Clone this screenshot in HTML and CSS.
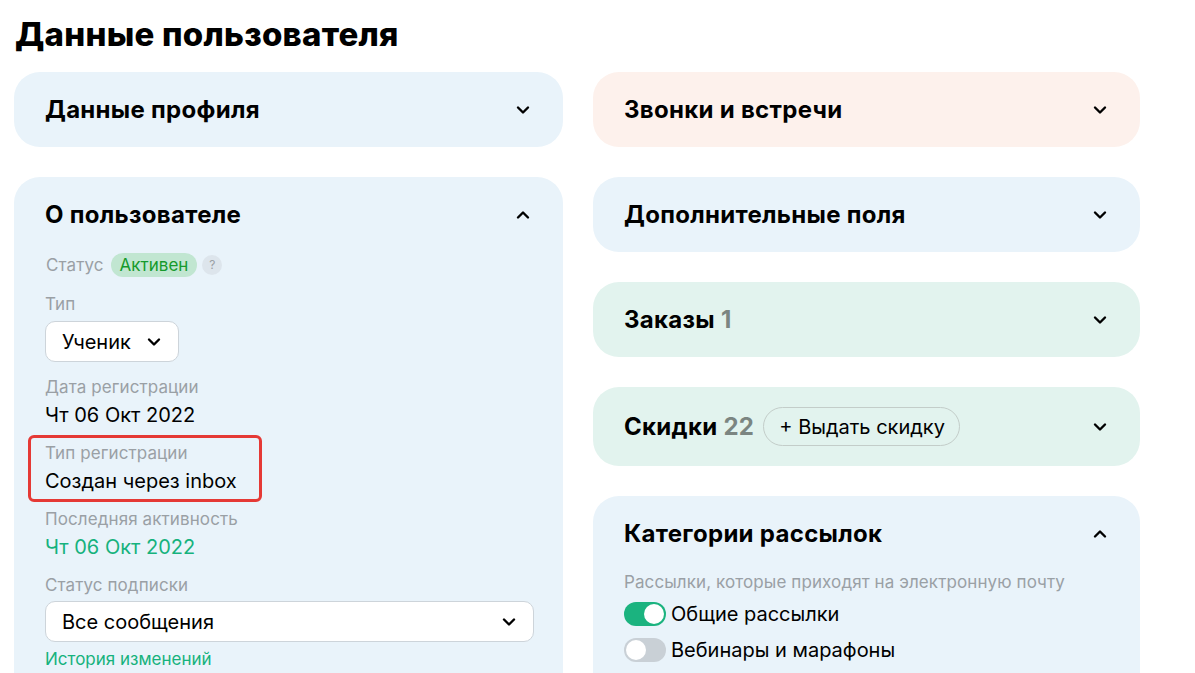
FILE: index.html
```html
<!doctype html>
<html>
<head>
<meta charset="UTF-8">
<title>Данные пользователя</title>
<link rel="stylesheet" href="styles.css">
</head>
<body>
    <h1 class="otsikko">Данные пользователя</h1>

    <div class="sarakkeet">
        <div class="sarake">
            <div class="kortti sininen">
                <div class="korttiYla">
                    <div class="korttiNimi">Данные профиля</div>
                    <svg class="nuoli" viewBox="0 0 16 16"><path d="M3 5.5 L8 10.5 L13 5.5"/></svg>
                </div>
            </div>

            <div class="kortti sininen auki">
                <div class="korttiYla">
                    <div class="korttiNimi">О пользователе</div>
                    <svg class="nuoli" viewBox="0 0 16 16"><path d="M3 10.5 L8 5.5 L13 10.5"/></svg>
                </div>
                <div class="korttiSisus">
                    <div class="tilaRivi">
                        <span class="otsake">Статус</span>
                        <span class="merkki">Активен</span>
                        <span class="kysymys">?</span>
                    </div>

                    <div class="kentta ensimmainen">
                        <div class="otsake">Тип</div>
                        <div class="valinta pieni">Ученик <svg class="valintaNuoli" viewBox="0 0 16 16"><path d="M3 5.5 L8 10.5 L13 5.5"/></svg></div>
                    </div>

                    <div class="kentta">
                        <div class="otsake">Дата регистрации</div>
                        <div class="arvo">Чт 06 Окт 2022</div>
                    </div>

                    <div class="kentta korostettu">
                        <div class="otsake">Тип регистрации</div>
                        <div class="arvo">Создан через inbox</div>
                    </div>

                    <div class="kentta">
                        <div class="otsake">Последняя активность</div>
                        <div class="arvo vihrea">Чт 06 Окт 2022</div>
                    </div>

                    <div class="kentta">
                        <div class="otsake">Статус подписки</div>
                        <div class="valinta levea">Все сообщения <svg class="valintaNuoli" viewBox="0 0 16 16"><path d="M3 5.5 L8 10.5 L13 5.5"/></svg></div>
                        <div class="linkki">История изменений</div>
                    </div>
                </div>
            </div>
        </div>

        <div class="sarake">
            <div class="kortti persikka">
                <div class="korttiYla">
                    <div class="korttiNimi">Звонки и встречи</div>
                    <svg class="nuoli" viewBox="0 0 16 16"><path d="M3 5.5 L8 10.5 L13 5.5"/></svg>
                </div>
            </div>

            <div class="kortti sininen">
                <div class="korttiYla">
                    <div class="korttiNimi">Дополнительные поля</div>
                    <svg class="nuoli" viewBox="0 0 16 16"><path d="M3 5.5 L8 10.5 L13 5.5"/></svg>
                </div>
            </div>

            <div class="kortti minttu">
                <div class="korttiYla">
                    <div class="korttiNimi">Заказы <span class="maara">1</span></div>
                    <svg class="nuoli" viewBox="0 0 16 16"><path d="M3 5.5 L8 10.5 L13 5.5"/></svg>
                </div>
            </div>

            <div class="kortti minttu">
                <div class="korttiYla">
                    <div class="korttiNimi">Скидки <span class="maara">22</span></div>
                    <div class="nappi">+ Выдать скидку</div>
                    <svg class="nuoli" viewBox="0 0 16 16"><path d="M3 5.5 L8 10.5 L13 5.5"/></svg>
                </div>
            </div>

            <div class="kortti sininen auki">
                <div class="korttiYla">
                    <div class="korttiNimi">Категории рассылок</div>
                    <svg class="nuoli" viewBox="0 0 16 16"><path d="M3 10.5 L8 5.5 L13 10.5"/></svg>
                </div>
                <div class="korttiSisus">
                    <div class="otsake">Рассылки, которые приходят на электронную почту</div>
                    <div class="kytkimet">
                        <div class="kytkinRivi"><span class="kytkin paalla"></span>Общие рассылки</div>
                        <div class="kytkinRivi"><span class="kytkin"></span>Вебинары и марафоны</div>
                    </div>
                </div>
            </div>
        </div>
    </div>
</body>
</html>
```

FILE: styles.css
```css
body {
    margin: 0;
    font-family: Inter, "Noto Sans", sans-serif;
    color: #000;
    background-color: #fff;
}

.otsikko {
    margin: 14px 0 0 15px;
    font-size: 33px;
    line-height: 40px;
    font-weight: 800;
    letter-spacing: 0.25px;
}

.sarakkeet {
    display: grid;
    grid-template-columns: 549px 547px;
    gap: 30px;
    margin: 18px 0 0 14px;
}

.sarake {
    display: flex;
    flex-direction: column;
    gap: 30px;
}

.kortti {
    border-radius: 26px;
}

.sininen {
    background-color: #e9f3fa;
}

.persikka {
    background-color: #fdf1ec;
}

.minttu {
    background-color: #e2f3ee;
}

.auki {
    border-radius: 26px 26px 0 0;
    padding-bottom: 40px;
}

.korttiYla {
    display: flex;
    align-items: center;
    min-height: 35px;
    padding: 20px 30px 20px 31px;
}

.korttiNimi {
    font-size: 24px;
    line-height: 35px;
    font-weight: 700;
    letter-spacing: 0.3px;
}

.maara {
    color: #7b8581;
}

.nuoli {
    width: 16px;
    height: 16px;
    margin-left: auto;
    margin-right: 2px;
    fill: none;
    stroke: #000;
    stroke-width: 2.4;
    stroke-linecap: round;
    stroke-linejoin: round;
}

.nappi {
    margin-left: 9px;
    height: 37px;
    padding: 0 14px 0 15px;
    border: 1px solid #c3cdc9;
    border-radius: 20px;
    display: flex;
    align-items: center;
    font-size: 20px;
}

.korttiSisus {
    padding: 0 30px 0 31px;
}

.otsake {
    font-size: 17px;
    line-height: 22px;
    letter-spacing: 0.1px;
    color: #9aa0a5;
}

.tilaRivi {
    display: flex;
    align-items: center;
    height: 24px;
    margin: 1px 0 0 1px;
}

.merkki {
    margin-left: 7px;
    height: 24px;
    padding: 0 9px;
    border-radius: 12px;
    background-color: #c1e6d1;
    color: #169a2c;
    font-size: 17px;
    line-height: 24px;
}

.kysymys {
    margin-left: 5px;
    width: 20px;
    height: 20px;
    border-radius: 50%;
    background-color: #dde5ec;
    color: #9aa0a5;
    font-size: 12px;
    line-height: 20px;
    text-align: center;
}

.kentta {
    position: relative;
    margin-top: 14px;
}

.ensimmainen {
    margin-top: 16px;
    margin-bottom: 1px;
}

.arvo {
    margin-top: 4px;
    font-size: 20px;
    line-height: 26px;
}

.vihrea {
    color: #16b27d;
}

.korostettu::after {
    content: "";
    position: absolute;
    left: -17px;
    top: -7px;
    width: 228px;
    height: 61px;
    border: 3px solid #e53935;
    border-radius: 6px;
}

.valinta {
    display: flex;
    align-items: center;
    box-sizing: border-box;
    height: 41px;
    margin-top: 5px;
    padding: 0 16px 0 16px;
    background-color: #fff;
    border: 1px solid #cdd4da;
    border-radius: 10px;
    font-size: 20px;
}

.pieni {
    width: 134px;
    margin-top: 6px;
}

.levea {
    width: 489px;
}

.valintaNuoli {
    width: 16px;
    height: 16px;
    margin-left: auto;
    fill: none;
    stroke: #000;
    stroke-width: 2.4;
    stroke-linecap: round;
    stroke-linejoin: round;
}

.linkki {
    margin-top: 6px;
    font-size: 17px;
    line-height: 22px;
    color: #16b27d;
}

.kytkimet {
    display: flex;
    flex-direction: column;
    gap: 12px;
    margin-top: 9px;
}

.kytkinRivi {
    display: flex;
    align-items: center;
    height: 24px;
    font-size: 20px;
}

.kytkin {
    position: relative;
    width: 42px;
    height: 24px;
    border-radius: 12px;
    background-color: #c9d0d6;
    margin-right: 5px;
}

.kytkin::after {
    content: "";
    position: absolute;
    left: 2px;
    top: 2px;
    width: 20px;
    height: 20px;
    border-radius: 50%;
    background-color: #fff;
}

.paalla {
    background-color: #1bb37f;
}

.paalla::after {
    left: 20px;
}
```
